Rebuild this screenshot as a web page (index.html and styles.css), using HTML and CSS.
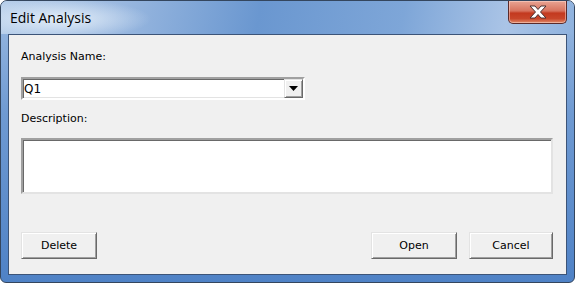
FILE: index.html
```html
<!DOCTYPE html>
<html lang="en">
<head>
  <meta charset="UTF-8">
  <title>Edit Analysis</title>
  <link rel="stylesheet" href="styles.css">
</head>
<body>
  <div class="window">
    <div class="titlebar">
      <span class="title">Edit Analysis</span>
      <button class="close-btn" aria-label="Close">
        <svg width="20" height="14" viewBox="0 0 20 14">
          <path d="M2 1 H7 L10 4.5 L13 1 H18 L12.5 7 L18 13 H13 L10 9.5 L7 13 H2 L7.5 7 Z" fill="#ffffff" stroke="#4a3030" stroke-width="1" stroke-linejoin="round"/>
        </svg>
      </button>
    </div>
    <div class="frame">
      <div class="client">
        <label class="field-label">Analysis Name:</label>
        <div class="combo">
          <span class="combo-value">Q1</span>
          <span class="combo-btn">
            <svg width="9" height="5" viewBox="0 0 9 5"><path d="M0 0 H9 L4.5 5 Z" fill="#000"/></svg>
          </span>
        </div>
        <label class="field-label desc-label">Description:</label>
        <div class="textarea"></div>
        <div class="buttons">
          <button class="btn btn-delete">Delete</button>
          <div class="right-buttons">
            <button class="btn">Open</button>
            <button class="btn btn-cancel">Cancel</button>
          </div>
        </div>
      </div>
    </div>
  </div>
</body>
</html>
```

FILE: styles.css
```css
body {
  margin: 0;
  background: #ffffff;
  font-family: "DejaVu Sans", sans-serif;
}
.window {
  width: 575px;
  height: 283px;
  box-sizing: border-box;
  border: 1px solid #34465e;
  border-radius: 7px 7px 6px 6px;
  background: linear-gradient(to bottom, #9cbbe2 0%, #6f9ad2 40%, #4f82c6 100%);
  display: flex;
  flex-direction: column;
  overflow: hidden;
}
.titlebar {
  height: 33px;
  display: flex;
  justify-content: space-between;
  align-items: flex-start;
  background:
    radial-gradient(ellipse 90px 20px at 60px 18px, rgba(230,240,250,0.95), rgba(230,240,250,0) 100%),
    linear-gradient(100deg, #b8cfea 0%, #9bb9e0 20%, #6a97d0 45%, #7ea6d8 70%, #aac4e6 88%, #8fb2de 100%);
}
.title {
  font-family: "Open Sans", "Noto Sans", sans-serif;
  font-size: 14px;
  color: #000;
  margin: 8px 0 0 9px;
  line-height: 18px;
}
.close-btn {
  width: 59px;
  height: 23px;
  margin: 0 7px 0 0;
  padding: 0;
  border: 1px solid #5a2a2a;
  border-top: none;
  border-radius: 0 0 5px 5px;
  background: linear-gradient(to bottom, #e8a493 0%, #d7735e 45%, #c3391f 55%, #c8462a 80%, #e08a6a 100%);
  box-shadow: inset 0 0 0 1px rgba(255,220,210,0.5);
  display: flex;
  align-items: center;
  justify-content: center;
}
.frame {
  flex: 1;
  padding: 0 7px 7px 7px;
  display: flex;
}
.client {
  flex: 1;
  background: #f0f0f0;
  border: 1px solid #3c5478;
  padding: 15px 12px 0 12px;
  display: flex;
  flex-direction: column;
  font-size: 11px;
  color: #000;
}
.field-label {
  line-height: 14px;
  height: 14px;
  padding-left: 0;
}
.combo {
  margin-top: 13px;
  width: 284px;
  height: 23px;
  box-sizing: border-box;
  background: #fff;
  border-style: solid;
  border-width: 2px;
  border-color: #a0a0a0 #ffffff #ffffff #a0a0a0;
  box-shadow: inset 1px 1px 0 #696969, inset -1px -1px 0 #e3e3e3;
  display: flex;
  align-items: center;
  justify-content: space-between;
}
.combo-value {
  padding-left: 1px;
  font-size: 12px;
}
.combo-btn {
  width: 19px;
  height: 19px;
  box-sizing: border-box;
  background: #f0f0f0;
  border-style: solid;
  border-width: 1px;
  border-color: #e3e3e3 #696969 #696969 #e3e3e3;
  box-shadow: inset 1px 1px 0 #ffffff, inset -1px -1px 0 #a0a0a0;
  display: flex;
  align-items: center;
  justify-content: center;
}
.desc-label {
  margin-top: 12px;
}
.textarea {
  margin-top: 12px;
  height: 56px;
  box-sizing: border-box;
  background: #fff;
  border-style: solid;
  border-width: 2px;
  border-color: #a0a0a0 #e3e3e3 #e3e3e3 #a0a0a0;
  box-shadow: inset 1px 1px 0 #696969;
  width: 532px;
}
.buttons {
  margin-top: 38px;
  display: flex;
  justify-content: space-between;
  width: 532px;
}
.right-buttons {
  display: flex;
  gap: 12px;
}
.btn {
  width: 86px;
  height: 27px;
  box-sizing: border-box;
  background: #f0f0f0;
  font-family: "DejaVu Sans", sans-serif;
  font-size: 11px;
  color: #000;
  padding: 0;
  border-style: solid;
  border-width: 1px;
  border-color: #e3e3e3 #696969 #696969 #e3e3e3;
  box-shadow: inset 1px 1px 0 #ffffff, inset -1px -1px 0 #a0a0a0;
}
.btn-delete {
  width: 76px;
}
.btn-cancel {
  width: 84px;
}
```
